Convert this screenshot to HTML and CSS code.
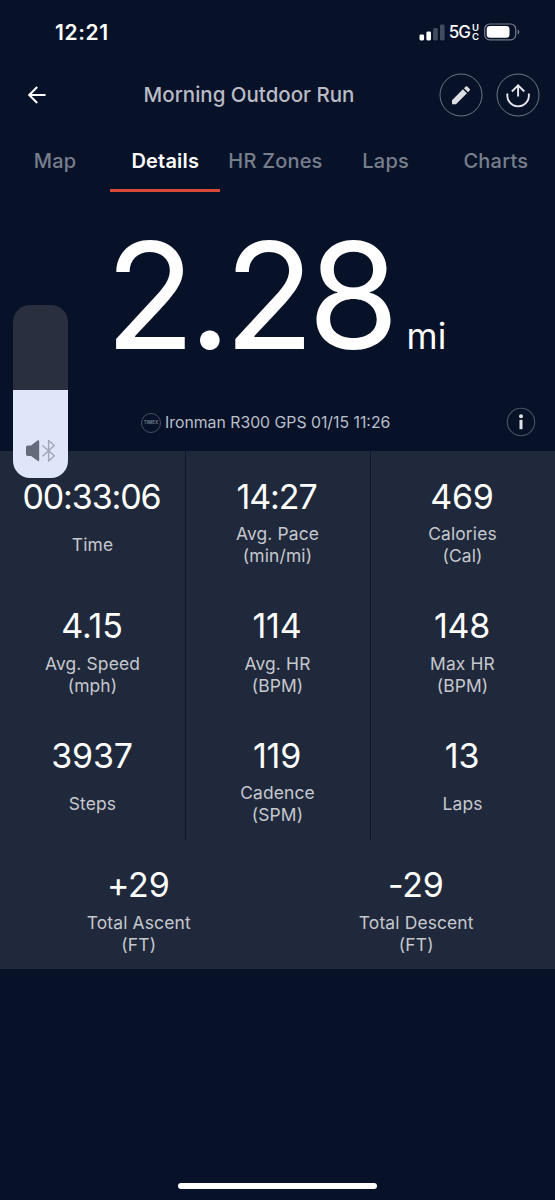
FILE: index.html
```html
<!DOCTYPE html>
<html lang="en">
<head>
<meta charset="utf-8">
<title>Morning Outdoor Run</title>
<link rel="stylesheet" href="styles.css">
</head>
<body>
<main class="screen">
  <div class="status">
    <span class="clock">12:21</span>
    <div class="status-right">
      <svg class="signal" width="26" height="17" viewBox="0 0 26 17">
        <rect x="0.5" y="10.5" width="4.6" height="6" rx="1.4" fill="#fff"/>
        <rect x="7.4" y="7.5" width="4.6" height="9" rx="1.4" fill="#fff"/>
        <rect x="14.2" y="4" width="4.6" height="12.5" rx="1.4" fill="#434b5e"/>
        <rect x="21" y="0.5" width="4.6" height="16" rx="1.4" fill="#434b5e"/>
      </svg>
      <span class="net">5G</span>
      <span class="net-sub"><span>U</span><span>C</span></span>
      <svg class="battery" width="36" height="18" viewBox="0 0 36 18">
        <rect x="0.7" y="1" width="31" height="15.8" rx="5" fill="none" stroke="#777d8a" stroke-width="1.2"/>
        <rect x="2.7" y="3" width="22.8" height="11.8" rx="3.2" fill="#fff"/>
        <path d="M33.600 6.400v5q1.800-.6 1.800-2.500t-1.800-2.500z" fill="#777d8a"/>
      </svg>
    </div>
  </div>

  <header class="header">
    <svg class="back" width="20" height="20" viewBox="0 0 20 20" fill="none" stroke="#fff" stroke-width="2">
      <path d="M18.500 10H2.500M10.200 2L2.200 10l8 8"/>
    </svg>
    <h1 class="title">Morning Outdoor Run</h1>
    <div class="actions">
      <svg width="44" height="44" viewBox="0 0 44 44">
        <circle cx="22" cy="22" r="21" fill="none" stroke="#6d7486"/>
        <path d="M13 31.200v-4l10.900-10.900 4 4L17 31.200zM25 15.200l1.700-1.700q.8-.7 1.600 0l2.400 2.400q.7.800 0 1.600L29 19.200z" fill="#dddee2"/>
      </svg>
      <svg width="44" height="44" viewBox="0 0 44 44" fill="none">
        <circle cx="22" cy="22" r="21" stroke="#6d7486"/>
        <path d="M11.500 20.500a10.800 10.800 0 1 0 21.200 0M22.100 23.500V12.300M15.900 18.500l6.200-6.200 6.200 6.200" stroke="#e6e7ea" stroke-width="1.900"/>
      </svg>
    </div>
  </header>

  <nav class="tabs">
    <span class="tab">Map</span>
    <span class="tab active">Details</span>
    <span class="tab">HR Zones</span>
    <span class="tab">Laps</span>
    <span class="tab">Charts</span>
  </nav>

  <section class="distance">
    <span class="distance-value">2.28</span>
    <span class="distance-unit">mi</span>
  </section>

  <section class="device">
    <div class="device-info">
      <span class="brand">TIMEX</span>
      <span class="device-name">Ironman R300 GPS 01/15 11:26</span>
    </div>
    <svg class="info" width="30" height="30" viewBox="0 0 30 30">
      <circle cx="15" cy="15" r="13.7" fill="none" stroke="#485064" stroke-width="1.1"/>
      <circle cx="15" cy="9.2" r="2" fill="#dfe1e6"/>
      <path d="M15 12.800v9.400" stroke="#dfe1e6" stroke-width="3"/>
    </svg>
  </section>

  <section class="stats">
    <div class="row">
      <div class="cell"><div class="value clocked">00:33:06</div><div class="label">Time</div></div>
      <div class="cell"><div class="value clocked">14:27</div><div class="label">Avg. Pace<br>(min/mi)</div></div>
      <div class="cell"><div class="value">469</div><div class="label">Calories<br>(Cal)</div></div>
    </div>
    <div class="row">
      <div class="cell"><div class="value">4.15</div><div class="label">Avg. Speed<br>(mph)</div></div>
      <div class="cell"><div class="value">114</div><div class="label">Avg. HR<br>(BPM)</div></div>
      <div class="cell"><div class="value">148</div><div class="label">Max HR<br>(BPM)</div></div>
    </div>
    <div class="row">
      <div class="cell"><div class="value">3937</div><div class="label">Steps</div></div>
      <div class="cell"><div class="value">119</div><div class="label">Cadence<br>(SPM)</div></div>
      <div class="cell"><div class="value">13</div><div class="label">Laps</div></div>
    </div>
    <div class="row totals">
      <div class="cell"><div class="value">+29</div><div class="label">Total Ascent<br>(FT)</div></div>
      <div class="cell"><div class="value">-29</div><div class="label">Total Descent<br>(FT)</div></div>
    </div>
  </section>

  <div class="home-bar"></div>

  <div class="volume">
    <div class="volume-level">
      <svg width="32" height="24" viewBox="0 0 32 24">
        <path d="M1 8.200q0-1.700 1.700-1.700H6L12.500 1.600q1.700-1.200 1.700.8v18.500q0 2-1.700.8L6 17H2.700Q1 17 1 15.300z" fill="#666b7b"/>
        <path d="M17.800 6.800l11.500 10L23.600 22V1.500l5.700 5-11.500 10.500" fill="none" stroke="#a0a6b6" stroke-width="1.4" stroke-linejoin="round" stroke-linecap="round"/>
      </svg>
    </div>
  </div>
</main>
</body>
</html>
```
FILE: styles.css
```css
* { box-sizing: border-box; }
body {
  margin: 0;
  background: #071229;
  font-family: Inter, "Liberation Sans", sans-serif;
  color: #fff;
}
.screen {
  position: relative;
  width: 555px;
  height: 1200px;
  display: flex;
  flex-direction: column;
  overflow: hidden;
}
.status {
  height: 64px;
  padding: 0 35px 0 55px;
  display: flex;
  align-items: center;
  justify-content: space-between;
}
.clock { font-size: 21px; font-weight: 600; letter-spacing: 0.6px; }
.status-right { display: flex; align-items: center; }
.net { margin-left: 4px; font-size: 17px; font-weight: 500; letter-spacing: -1px; }
.net-sub {
  display: flex;
  flex-direction: column;
  margin: 0 5px 0 2px;
  font-size: 9.5px;
  line-height: 9px;
  font-weight: 600;
}
.header {
  height: 62px;
  padding: 0 15px 0 27px;
  display: grid;
  grid-template-columns: 20px 1fr 101px;
  align-items: center;
}
.title {
  margin: 0;
  padding: 0 0 2px 12px;
  text-align: center;
  font-size: 20.5px;
  font-weight: 500;
  color: #b9bcc4;
  white-space: nowrap;
}
.actions { display: flex; gap: 13px; }
.tabs { height: 66px; display: grid; grid-template-columns: repeat(5, 110.2px); }
.tab {
  display: flex;
  align-items: center;
  justify-content: center;
  padding-top: 6px;
  border-bottom: 3px solid transparent;
  font-size: 20px;
  font-weight: 500;
  letter-spacing: 0.2px;
  color: #777e8c;
  white-space: nowrap;
}
.tab.active { color: #fff; font-weight: 600; border-color: #d74a35; }
.distance {
  height: 202px;
  padding-left: 105px;
  display: flex;
  align-items: baseline;
  line-height: 207px;
}
.distance-value { font-size: 148px; letter-spacing: -6.8px; }
.distance-unit { margin-left: 14px; font-size: 35.5px; line-height: 1; font-weight: 400; }
.device {
  height: 57px;
  padding: 0 19px 1px 141px;
  display: flex;
  align-items: center;
  justify-content: space-between;
}
.device-info { display: flex; align-items: center; gap: 4px; padding-top: 1px; }
.brand {
  width: 20px;
  height: 20px;
  display: flex;
  align-items: center;
  justify-content: center;
  border: 1px solid #465064;
  border-radius: 50%;
  font-size: 4.5px;
  font-weight: 600;
  color: #7d8594;
}
.device-name { font-size: 15.8px; color: #b9bfcb; white-space: nowrap; }
.stats { height: 518px; display: grid; grid-template-rows: repeat(4, 1fr); background: #20293b; }
.row { display: grid; grid-template-columns: repeat(3, minmax(0, 1fr)); }
.totals { grid-template-columns: 1fr 1fr; }
.cell {
  padding-top: 24.5px;
  display: flex;
  flex-direction: column;
  align-items: center;
  box-shadow: 1px 0 0 #0c162c;
}
.cell:last-child, .totals .cell { box-shadow: none; }
.value { padding-right: 1px; font-size: 34px; line-height: 42px; height: 42px; letter-spacing: -0.2px; }
.clocked { padding-right: 2px; letter-spacing: -1.1px; }
.label {
  height: 55px;
  display: flex;
  align-items: center;
  font-size: 17.4px;
  line-height: 21.6px;
  text-align: center;
  letter-spacing: 0.15px;
  color: #c5c8ce;
}
.home-bar {
  margin: 214px auto 0;
  width: 199px;
  height: 6px;
  border-radius: 3px;
  background: #fff;
}
.volume {
  position: absolute;
  left: 13px;
  top: 305px;
  width: 55px;
  height: 173px;
  display: flex;
  align-items: flex-end;
  overflow: hidden;
  border-radius: 17px;
  background: #292f3e;
}
.volume-level {
  width: 100%;
  height: 88px;
  padding: 49px 0 0 12px;
  background: #dfe6fa;
}
```
